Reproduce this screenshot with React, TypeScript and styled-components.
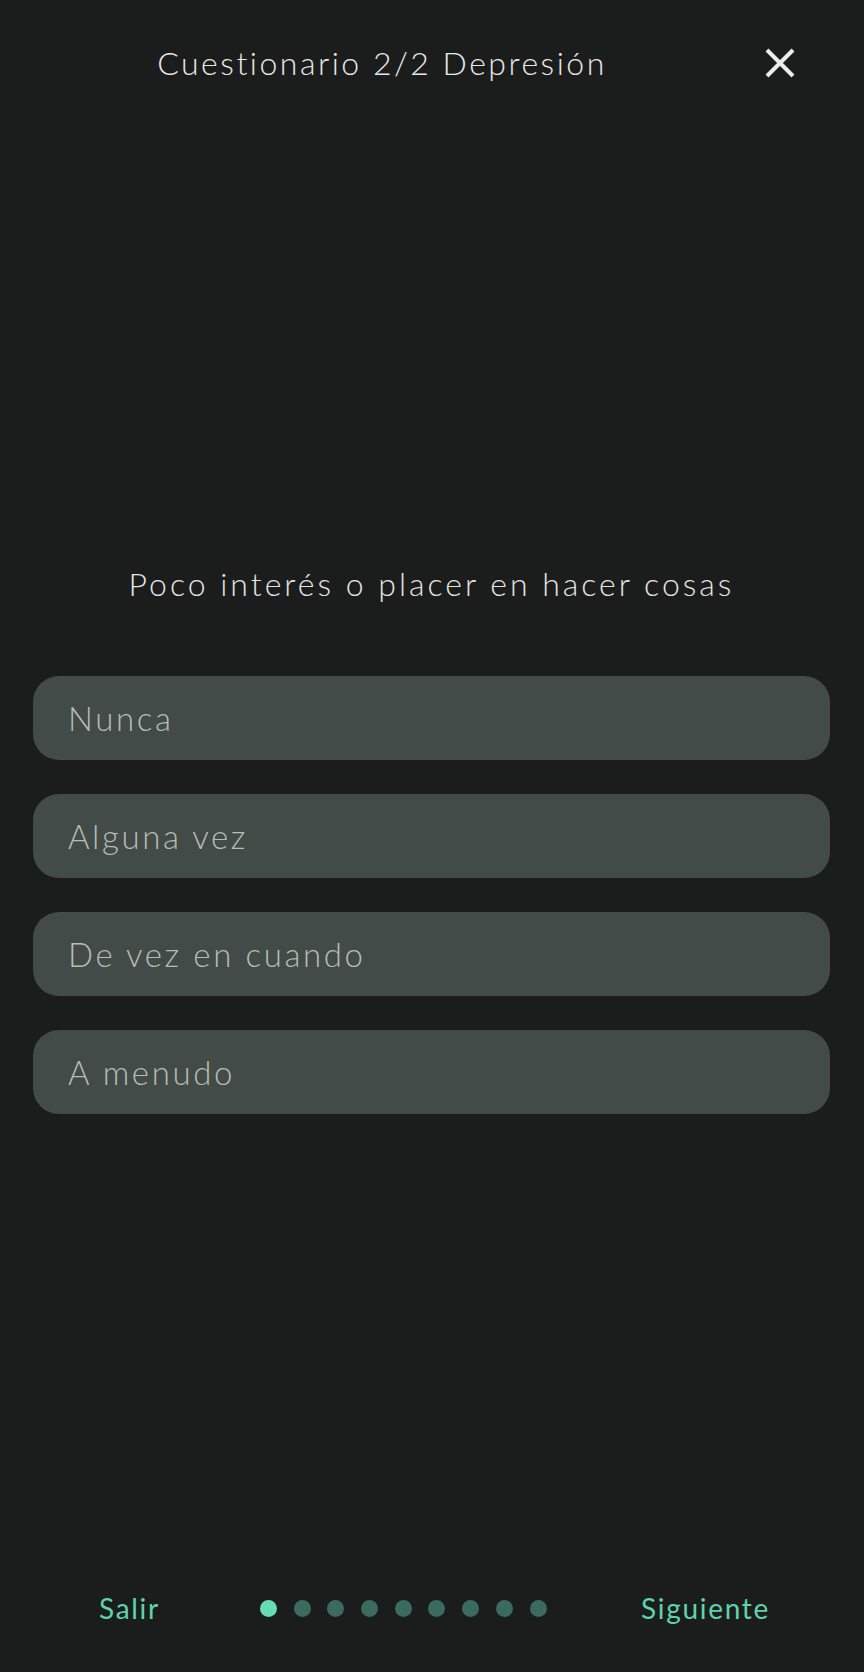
import React from "react";
import styled, { createGlobalStyle } from "styled-components";

const GlobalStyle = createGlobalStyle`
  html, body {
    margin: 0;
    padding: 0;
    background: #1b1d1c;
  }
  * { box-sizing: border-box; }
`;

const FONT = `"Lato", "Open Sans", "Noto Sans", sans-serif`;

const Page = styled.div`
  width: 864px;
  height: 1672px;
  display: flex;
  flex-direction: column;
  background: #1b1d1c;
  font-family: ${FONT};
  font-weight: 300;
`;

const Header = styled.header`
  height: 126px;
  display: flex;
  align-items: center;
  padding: 0 60px 0 8px;
`;

const Title = styled.h1`
  flex: 1;
  margin: 0;
  text-align: center;
  font-size: 32px;
  font-weight: 300;
  letter-spacing: 2.5px;
  color: #e8e8e8;
  line-height: 40px;
`;

const CloseButton = styled.button`
  width: 48px;
  height: 48px;
  display: flex;
  align-items: center;
  justify-content: center;
  background: none;
  border: none;
  padding: 0;
  cursor: pointer;
`;

const Main = styled.main`
  flex: 1;
  display: flex;
  flex-direction: column;
  padding: 434px 34px 0 33px;
`;

const Question = styled.h2`
  margin: 0;
  text-align: center;
  font-size: 32px;
  font-weight: 300;
  letter-spacing: 3px;
  line-height: 48px;
  color: #e4e4e4;
`;

const Options = styled.div`
  margin-top: 68px;
  display: flex;
  flex-direction: column;
  gap: 34px;
`;

const Option = styled.button`
  height: 84px;
  width: 100%;
  display: flex;
  align-items: center;
  padding: 0 35px;
  border: none;
  border-radius: 26px;
  background: #424b47;
  color: #b4bdb7;
  font-family: ${FONT};
  font-weight: 300;
  font-size: 33px;
  letter-spacing: 2.6px;
  text-align: left;
  cursor: pointer;
`;

const Footer = styled.footer`
  height: 128px;
  display: flex;
  align-items: center;
  padding: 0 94px 0 99px;
`;

const FooterLink = styled.button<{ $align: "left" | "right" }>`
  width: 161px;
  background: none;
  border: none;
  padding: 0;
  color: #5fd3a9;
  font-family: ${FONT};
  font-weight: 400;
  font-size: 28px;
  letter-spacing: 1.7px;
  text-align: ${(p) => p.$align};
  margin-left: ${(p) => (p.$align === "right" ? "auto" : "0")};
  cursor: pointer;
`;

const Dots = styled.div`
  display: flex;
  gap: 16.7px;
`;

const Dot = styled.span<{ $active: boolean }>`
  width: 17px;
  height: 17px;
  border-radius: 50%;
  background: ${(p) => (p.$active ? "#66dbb4" : "#3a6b5c")};
`;

const options = ["Nunca", "Alguna vez", "De vez en cuando", "A menudo"];

export default function App() {
  return (
    <>
      <GlobalStyle />
      <Page>
        <Header>
          <Title>Cuestionario 2/2 Depresión</Title>
          <CloseButton aria-label="Cerrar">
            <svg width="30" height="30" viewBox="0 0 30 30">
              <path d="M2 2 L28 28 M28 2 L2 28" stroke="#ececec" strokeWidth="4" />
            </svg>
          </CloseButton>
        </Header>
        <Main>
          <Question>Poco interés o placer en hacer cosas</Question>
          <Options>
            {options.map((o) => (
              <Option key={o}>{o}</Option>
            ))}
          </Options>
        </Main>
        <Footer>
          <FooterLink $align="left">Salir</FooterLink>
          <Dots>
            {Array.from({ length: 9 }).map((_, i) => (
              <Dot key={i} $active={i === 0} />
            ))}
          </Dots>
          <FooterLink $align="right">Siguiente</FooterLink>
        </Footer>
      </Page>
    </>
  );
}
